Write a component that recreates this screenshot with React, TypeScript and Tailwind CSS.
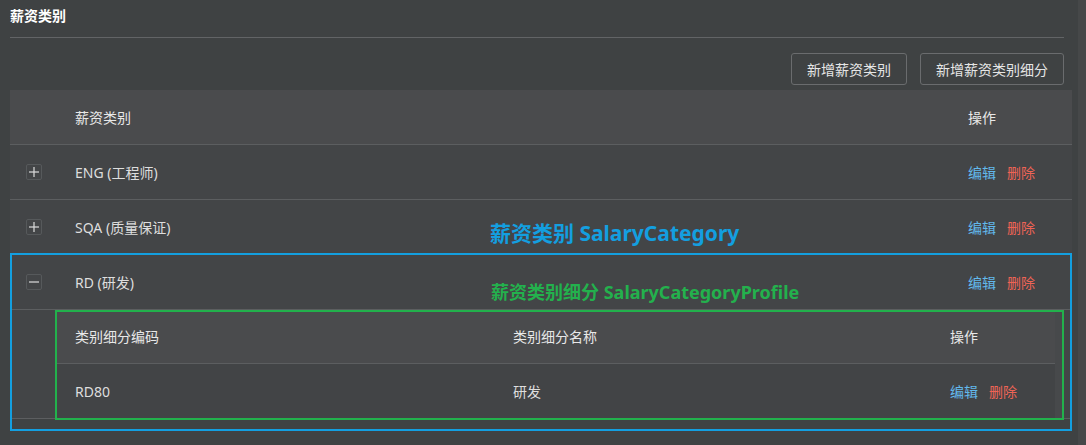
const font = { fontFamily: '"Noto Sans", "Noto Sans CJK SC", sans-serif' };

const Actions: React.FC = () => (
	<div className="flex items-center gap-[11px] text-[14px]">
		<span className="text-[#62b9ec]">编辑</span>
		<span className="text-[#ef6456]">删除</span>
	</div>
);

const ToggleIcon: React.FC<{ open?: boolean }> = ({ open }) => (
	<span className="w-4 h-4 flex items-center justify-center rounded-[2px] border border-[#56595b]">
		<svg width="10" height="10" viewBox="0 0 10 10">
			<path d="M0 5h10" stroke="#dcdcdc" strokeWidth="1.2" />
			{!open && <path d="M5 0v10" stroke="#dcdcdc" strokeWidth="1.2" />}
		</svg>
	</span>
);

const CategoryRow: React.FC<{ name: string; open?: boolean }> = ({ name, open }) => (
	<div className="flex h-[55px] items-center border-b border-[#5c5e60] bg-[#434547]">
		<div className="w-[46px] pl-4 flex items-center">
			<ToggleIcon open={open} />
		</div>
		<div className="flex-1 pl-[19px] text-[14px] text-[#dedede]">{name}</div>
		<div className="w-[120px] pl-4">
			<Actions />
		</div>
	</div>
);

export default function App() {
	return (
		<div className="w-[1086px] h-[445px] flex bg-[#3f4243] overflow-hidden" style={font}>
			<div className="flex-1 pl-[10px] pr-[6px] flex flex-col">
				<div className="mr-[8px] h-[38px] pt-[8px] border-b border-[#626466]">
					<h2 className="text-[14px] leading-4 font-bold text-white">薪资类别</h2>
				</div>

				<div className="mr-[8px] mt-[15px] flex justify-end gap-[13px]">
					<button className="h-[32px] px-[15px] rounded-[3px] border border-[#6a6c6e] text-[14px] text-[#e6e6e6]">
						新增薪资类别
					</button>
					<button className="h-[32px] px-[15px] rounded-[3px] border border-[#6a6c6e] text-[14px] text-[#e6e6e6]">
						新增薪资类别细分
					</button>
				</div>

				<div className="mt-[5px] flex flex-col">
					<div className="flex h-[55px] items-center border-b border-[#5c5e60] bg-[#4a4b4d] text-[14px] text-[#e8e8e8]">
						<div className="w-[46px]"></div>
						<div className="flex-1 pl-[19px]">薪资类别</div>
						<div className="w-[120px] pl-4">操作</div>
					</div>

					<CategoryRow name="ENG (工程师)" />
					<CategoryRow name="SQA (质量保证)" />

					<div className="relative">
						<div className="relative">
							<CategoryRow name="RD (研发)" open />
							<span className="absolute left-[481px] top-[24px] text-[18px] font-bold text-[#23b14d] whitespace-nowrap">
								薪资类别细分 SalaryCategoryProfile
							</span>
						</div>

						<div className="flex h-[109px] border-b border-[#5c5e60] bg-[#434547]">
							<div className="w-[46px]"></div>
							<div className="relative w-[1007px] flex">
								<div className="flex-1 flex flex-col text-[14px]">
									<div className="flex h-[54px] items-center border-b border-[#5c5e60] bg-[#4a4b4d] text-[#e8e8e8]">
										<div className="w-[440px] pl-[19px]">类别细分编码</div>
										<div className="w-[438px] pl-[17px]">类别细分名称</div>
										<div className="flex-1 pl-4">操作</div>
									</div>
									<div className="flex h-[54px] items-center bg-[#424446] text-[#dedede]">
										<div className="w-[440px] pl-[19px]">RD80</div>
										<div className="w-[438px] pl-[17px]">研发</div>
										<div className="flex-1 pl-4">
											<Actions />
										</div>
									</div>
								</div>
								<div className="w-[8px] bg-[#47494b]"></div>
								<div className="absolute -left-px -right-px top-0 -bottom-[2px] border-2 border-[#22b14c]"></div>
							</div>
						</div>

						<div className="absolute left-0 right-0 -top-[2px] -bottom-[12px] border-2 border-[#139fe0]"></div>
						<span className="absolute left-[480px] -top-[37px] text-[21px] font-bold text-[#139fe0] whitespace-nowrap">
							薪资类别 SalaryCategory
						</span>
					</div>
				</div>
			</div>
			<div className="w-[8px] bg-[#464849]"></div>
		</div>
	);
}
